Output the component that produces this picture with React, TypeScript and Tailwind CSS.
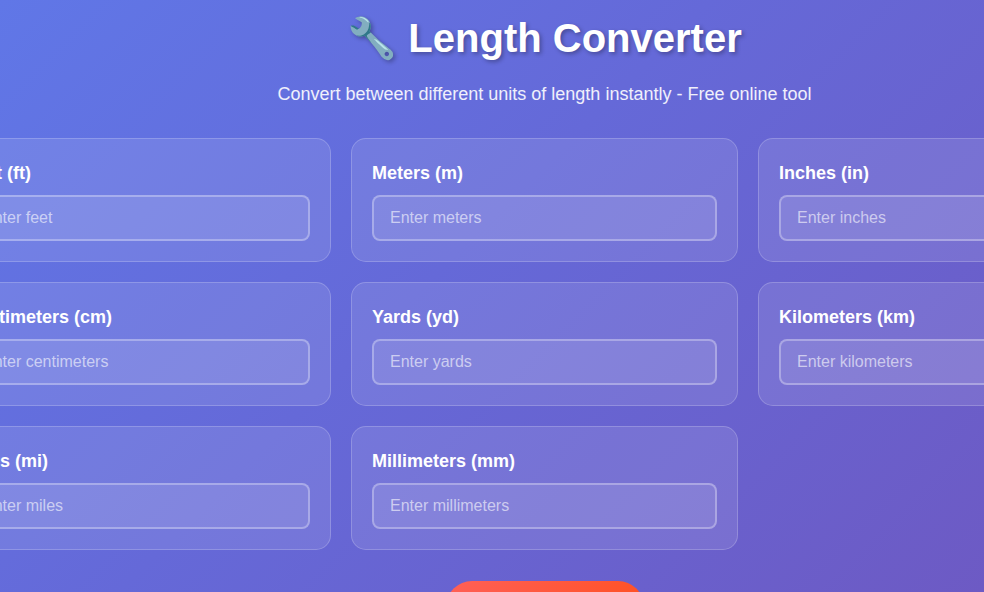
import { useState } from "react";

type Unit = { id: string; label: string; placeholder: string; meters: number };

const units: Unit[] = [
  { id: "feet", label: "Feet (ft)", placeholder: "Enter feet", meters: 0.3048 },
  { id: "meters", label: "Meters (m)", placeholder: "Enter meters", meters: 1 },
  { id: "inches", label: "Inches (in)", placeholder: "Enter inches", meters: 0.0254 },
  { id: "centimeters", label: "Centimeters (cm)", placeholder: "Enter centimeters", meters: 0.01 },
  { id: "yards", label: "Yards (yd)", placeholder: "Enter yards", meters: 0.9144 },
  { id: "kilometers", label: "Kilometers (km)", placeholder: "Enter kilometers", meters: 1000 },
  { id: "miles", label: "Miles (mi)", placeholder: "Enter miles", meters: 1609.344 },
  { id: "millimeters", label: "Millimeters (mm)", placeholder: "Enter millimeters", meters: 0.001 },
];

type CardProps = { unit: Unit; value: string; onChange: (text: string) => void };

function UnitCard({ unit, value, onChange }: CardProps) {
  return (
    <div className="rounded-[15px] border border-white/20 bg-white/10 p-5">
      <label htmlFor={unit.id} className="mb-2 block text-lg leading-7 font-bold">
        {unit.label}
      </label>
      <input
        id={unit.id}
        type="text"
        inputMode="decimal"
        value={value}
        placeholder={unit.placeholder}
        onChange={(event) => onChange(event.target.value)}
        className="block h-[46px] w-full rounded-lg border-2 border-white/30 bg-white/10 px-4 text-base text-white outline-none placeholder:text-white/60 focus:border-white/60"
      />
    </div>
  );
}

export default function App() {
  const [values, setValues] = useState<Record<string, string>>({});

  const convert = (source: Unit, text: string) => {
    const amount = parseFloat(text);
    const next: Record<string, string> = {};
    if (!Number.isNaN(amount)) {
      for (const unit of units) {
        next[unit.id] = String(Number(((amount * source.meters) / unit.meters).toPrecision(8)));
      }
    }
    next[source.id] = text;
    setValues(next);
  };

  return (
    <div className="h-screen overflow-hidden bg-[linear-gradient(135deg,#6077e7_0%,#6569d8_45%,#6d5ac4_100%)] font-['Liberation_Sans',Arial,sans-serif] text-white">
      <main className="-ml-14 w-[calc(100%+217px)]">
        <header className="pt-1.5 pb-[30px] text-center">
          <h1 className="mb-2.5 text-[40px] leading-16 font-bold [text-shadow:2px_2px_4px_rgba(0,0,0,0.3)]">
            🔧 Length Converter
          </h1>
          <p className="text-lg leading-7 text-white/90">
            Convert between different units of length instantly - Free online tool
          </p>
        </header>
        <div className="grid grid-cols-3 gap-5">
          {units.map((unit) => (
            <UnitCard
              key={unit.id}
              unit={unit}
              value={values[unit.id] ?? ""}
              onChange={(text) => convert(unit, text)}
            />
          ))}
        </div>
        <div className="mt-[31px] flex justify-center">
          <button
            type="button"
            aria-label="Clear all"
            onClick={() => setValues({})}
            className="h-[52px] w-[198px] rounded-full bg-[linear-gradient(135deg,#ff6058,#ff4f1c)]"
          />
        </div>
      </main>
    </div>
  );
}
